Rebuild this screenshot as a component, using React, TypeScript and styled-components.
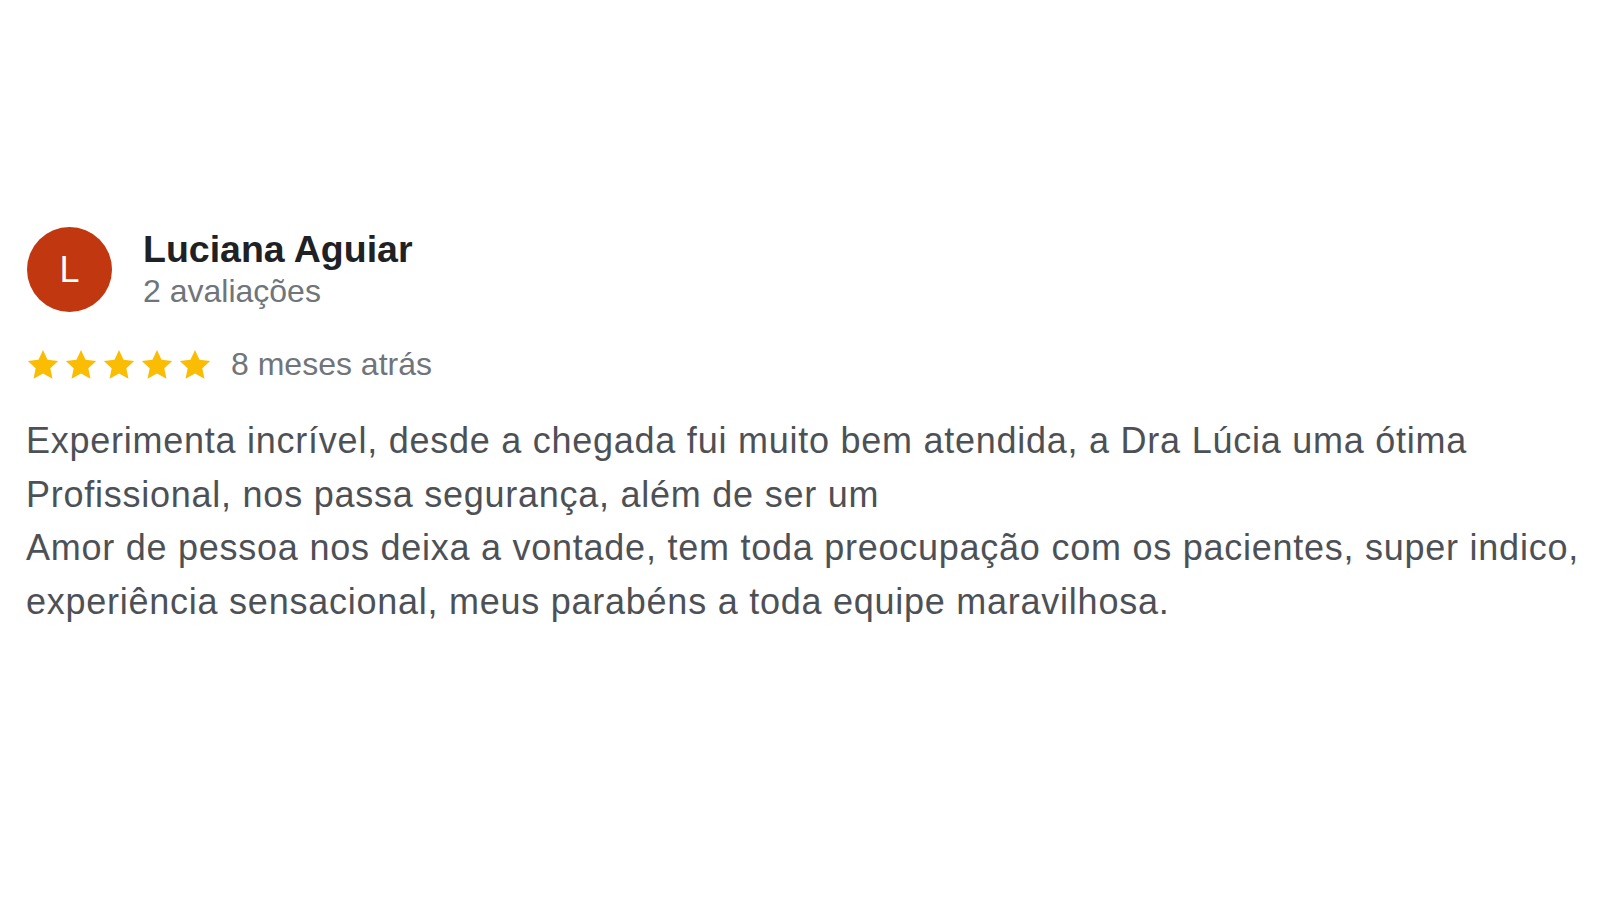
import React from "react";
import styled, { createGlobalStyle } from "styled-components";

const GlobalStyle = createGlobalStyle`
  html, body {
    margin: 0;
    padding: 0;
    background: #fff;
  }
  body {
    font-family: "Liberation Sans", Arial, sans-serif;
  }
`;

const Page = styled.div`
  width: 1600px;
  height: 900px;
  box-sizing: border-box;
  padding: 227px 0 0 26px;
  background: #fff;
`;

const Header = styled.div`
  display: flex;
  align-items: center;
  gap: 31px;
  margin-left: 1px;
`;

const Avatar = styled.div<{ $bg: string }>`
  width: 85px;
  height: 85px;
  border-radius: 50%;
  background: ${(p) => p.$bg};
  color: #fff;
  display: flex;
  align-items: center;
  justify-content: center;
  font-size: 36px;
  flex-shrink: 0;
`;

const Who = styled.div`
  display: flex;
  flex-direction: column;
  margin-top: -2px;
`;

const Name = styled.div`
  font-size: 37.5px;
  font-weight: 700;
  color: #202124;
  line-height: 44px;
`;

const Sub = styled.div`
  font-size: 32px;
  color: #70757a;
  line-height: 40px;
`;

const RatingRow = styled.div`
  display: flex;
  align-items: center;
  gap: 20px;
  margin-top: 34px;
  margin-left: 1px;
`;

const Stars = styled.div`
  display: flex;
  gap: 6px;
`;

const When = styled.span`
  font-size: 32px;
  color: #70757a;
`;

const Body = styled.p`
  margin: 31px 0 0;
  font-size: 36px;
  letter-spacing: 0.75px;
  line-height: 53.6px;
  color: #4d5156;
  white-space: pre-line;
`;

const Star = () => (
  <svg width="32" height="31" viewBox="0 0 24 23">
    <path
      d="M12 0.6l3.4 7.3 8 0.9-5.9 5.5 1.6 7.9L12 18.2l-7.1 4 1.6-7.9L0.6 8.8l8-0.9z"
      fill="#fbbc04"
    />
  </svg>
);

const review =
  "Experimenta incrível, desde a chegada fui muito bem atendida, a Dra Lúcia uma ótima Profissional, nos passa segurança, além de ser um\nAmor de pessoa nos deixa a vontade, tem toda preocupação com os pacientes, super indico, experiência sensacional, meus parabéns a toda equipe maravilhosa.";

function App() {
  return (
    <>
      <GlobalStyle />
      <Page>
        <Header>
          <Avatar $bg="#c1370f">L</Avatar>
          <Who>
            <Name>Luciana Aguiar</Name>
            <Sub>2 avaliações</Sub>
          </Who>
        </Header>
        <RatingRow>
          <Stars>
            {[0, 1, 2, 3, 4].map((i) => (
              <Star key={i} />
            ))}
          </Stars>
          <When>8 meses atrás</When>
        </RatingRow>
        <Body>{review}</Body>
      </Page>
    </>
  );
}

export default App;
